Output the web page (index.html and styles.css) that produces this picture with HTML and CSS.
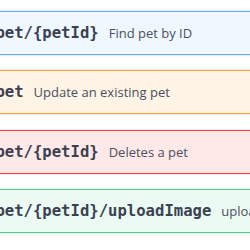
FILE: index.html
```html
<!DOCTYPE html>
<html>
<head>
    <meta charset="UTF-8">
    <meta name="viewport" content="width=device-width, initial-scale=1.0">
    <title>Swagger Petstore - pet operations</title>
    <link rel="stylesheet" href="styles.css">
</head>
<body>

    <!-- operations list, scrolled so the method badges sit off the left edge -->
    <div class="opblocks">
        <div class="opblock opblock-get">
            <div class="opblock-summary">
                <span class="opblock-method">GET</span>
                <span class="opblock-path">/pet/{petId}</span>
                <span class="opblock-desc">Find pet by ID</span>
            </div>
        </div>
        <div class="opblock opblock-put">
            <div class="opblock-summary">
                <span class="opblock-method">PUT</span>
                <span class="opblock-path">/pet</span>
                <span class="opblock-desc">Update an existing pet</span>
            </div>
        </div>
        <div class="opblock opblock-delete">
            <div class="opblock-summary">
                <span class="opblock-method">DELETE</span>
                <span class="opblock-path">/pet/{petId}</span>
                <span class="opblock-desc">Deletes a pet</span>
            </div>
        </div>
        <div class="opblock opblock-post">
            <div class="opblock-summary">
                <span class="opblock-method">POST</span>
                <span class="opblock-path">/pet/{petId}/uploadImage</span>
                <span class="opblock-desc">uploads an image</span>
            </div>
        </div>
    </div>

</body>
</html>
```

FILE: styles.css
```css
body {
    margin: 0;
    background-color: #fff;
    font-family: "Open Sans", sans-serif;
    color: #3b4151;
    overflow: hidden;
}
.opblocks {
    margin-left: -110px;
    padding-top: 11px;
    width: 480px;
}
.opblock {
    margin-bottom: 15.33px;
    border: 1px solid;
    border-radius: 4px;
    box-shadow: 0 0 3px rgba(0, 0, 0, 0.19);
}
.opblock-summary {
    display: flex;
    align-items: center;
    height: 42px;
    padding: 0 5px;
    box-sizing: border-box;
}
.opblock-method {
    min-width: 80px;
    padding: 6px 0;
    border-radius: 3px;
    color: #fff;
    font-size: 14px;
    font-weight: 700;
    text-align: center;
}
.opblock-path {
    padding: 0 10px;
    font-family: "DejaVu Sans Mono", monospace;
    font-size: 15.6px;
    font-weight: 600;
    white-space: nowrap;
}
.opblock-desc {
    font-size: 13px;
    color: #4a5060;
    white-space: nowrap;
}

/* method colours */
.opblock-get {
    background: rgba(97, 175, 254, 0.1);
    border-color: #61affe;
}
.opblock-get .opblock-method { background: #61affe; }
.opblock-put {
    background: rgba(252, 161, 48, 0.12);
    border-color: #fca130;
}
.opblock-put .opblock-method { background: #fca130; }
.opblock-delete {
    background: rgba(249, 62, 62, 0.12);
    border-color: #f93e3e;
}
.opblock-delete .opblock-method { background: #f93e3e; }
.opblock-post {
    background: rgba(73, 204, 144, 0.1);
    border-color: #49cc90;
}
.opblock-post .opblock-method { background: #49cc90; }
```
